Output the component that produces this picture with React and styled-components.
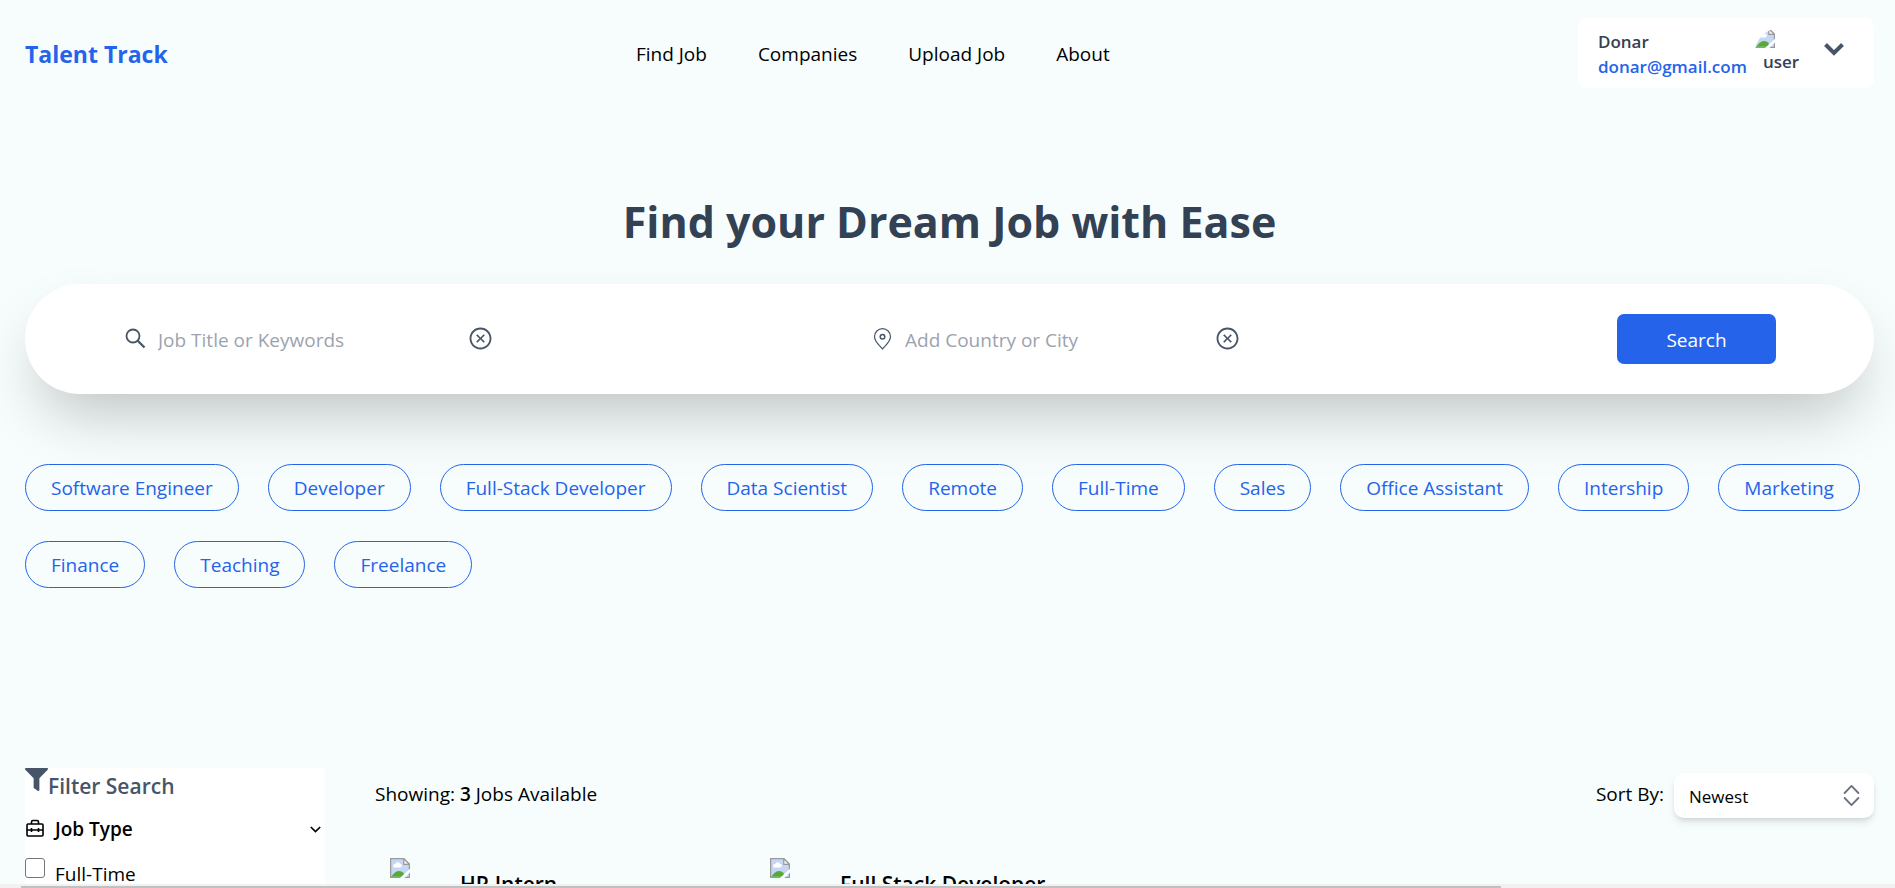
import React from "react";
import styled, { createGlobalStyle } from "styled-components";
import { AiOutlineCloseCircle } from "react-icons/ai";
import { FaFilter } from "react-icons/fa";

const GlobalStyle = createGlobalStyle`
  *, *::before, *::after { box-sizing: border-box; }
  body {
    margin: 0;
    background: #f7fdfd;
    color: #000;
    font-family: "Open Sans", "Noto Sans", sans-serif;
    font-size: 19px;
    line-height: 30px;
  }
  h1, h2, h3, p { margin: 0; }
  button, input, select { font: inherit; color: inherit; }
`;

const Page = styled.div`
  height: 100vh;
  display: flex;
  flex-direction: column;
`;

const Content = styled.div`
  flex: 1;
  min-height: 0;
  overflow: hidden;
`;

const Header = styled.header`
  display: flex;
  align-items: center;
  justify-content: space-between;
  padding: 18px 21px 0 25px;
`;

const Brand = styled.a`
  padding-top: 2px;
  color: #2563eb;
  font-size: 23px;
  font-weight: 700;
  text-decoration: none;
`;

const Nav = styled.nav`
  display: flex;
  gap: 51px;
  padding-top: 2px;
`;

const NavLink = styled.a`
  color: #000;
  text-decoration: none;
`;

const UserMenu = styled.button`
  display: flex;
  align-items: flex-start;
  width: 296px;
  height: 70px;
  padding: 10px 20px;
  border: 0;
  border-radius: 8px;
  background: #fff;
  color: #334155;
  font-size: 17px;
  font-weight: 600;
  line-height: 25px;
  text-align: left;
`;

const UserText = styled.span`
  display: flex;
  flex-direction: column;
  width: 147px;
  padding-top: 1px;
`;

const Email = styled.span`
  color: #2563eb;
`;

const Avatar = styled.span`
  display: flex;
  flex-direction: column;
  width: 50px;
  height: 50px;
  margin-left: 10px;
  border-radius: 50%;
  overflow: hidden;
  line-height: 28px;

  svg { display: block; }
  span { padding-left: 8px; }
`;

const ChevronSlot = styled.span`
  display: flex;
  margin: 11px 0 0 19px;
  color: #475569;
`;

const Main = styled.main`
  padding: 0 21px 0 25px;
`;

const Title = styled.h1`
  margin-top: 104px;
  color: #334155;
  font-size: 43px;
  font-weight: 700;
  line-height: 60px;
  text-align: center;
`;

const SearchBar = styled.form`
  display: flex;
  align-items: center;
  justify-content: space-between;
  height: 110px;
  margin-top: 32px;
  padding: 0 98px;
  border-radius: 55px;
  background: #fff;
  box-shadow: 0 31px 62px -15px rgba(0, 0, 0, 0.25);
`;

const Field = styled.label`
  display: flex;
  align-items: center;
  gap: 10px;
  width: 370px;
  color: #475569;

  svg { flex: none; }
`;

const FieldInput = styled.input`
  flex: 1;
  min-width: 0;
  padding: 4px 0 2px;
  border: 0;
  outline: 0;
  background: transparent;

  &::placeholder { color: #9ca3af; opacity: 1; }
`;

const ClearButton = styled.button`
  display: flex;
  padding: 0 0 2px;
  border: 0;
  background: transparent;
  color: #475569;
`;

const SearchButton = styled.button`
  width: 159px;
  height: 50px;
  padding: 2px 0 0;
  border: 0;
  border-radius: 7px;
  background: #2563eb;
  color: #fff;
`;

const Tags = styled.div`
  display: flex;
  flex-wrap: wrap;
  gap: 30px 29px;
  margin-top: 70px;
`;

const Tag = styled.button`
  height: 47px;
  padding: 0 25px;
  border: 1px solid #2563eb;
  border-radius: 24px;
  background: transparent;
  color: #2563eb;
`;

const Results = styled.section`
  display: flex;
  align-items: flex-start;
  gap: 50px;
  margin-top: 180px;
`;

const Filters = styled.aside`
  width: 300px;
  height: 400px;
  flex: none;
  background: #fff;
`;

const FilterTitle = styled.h2`
  display: flex;
  color: #475569;
  font-size: 21px;
  font-weight: 600;
  line-height: 36px;
`;

const FilterGroup = styled.button`
  display: flex;
  align-items: center;
  width: 100%;
  margin-top: 10px;
  padding: 0 4px 0 0;
  border: 0;
  background: transparent;
  font-weight: 600;

  span { flex: 1; padding-left: 10px; text-align: left; }
`;

const CheckRow = styled.label`
  display: flex;
  gap: 10px;
  padding-top: 14px;
  line-height: 32px;
`;

const Checkbox = styled.input`
  appearance: none;
  width: 20px;
  height: 20px;
  margin: 0;
  border: 1px solid #767676;
  border-radius: 3px;
  background: #fff;
`;

const Listing = styled.div`
  flex: 1;
  min-width: 0;
`;

const ListingBar = styled.div`
  display: flex;
  align-items: center;
  justify-content: space-between;
  height: 52px;
`;

const Count = styled.strong`
  font-weight: 600;
`;

const SortControl = styled.label`
  display: flex;
  align-items: center;
  gap: 10px;
`;

const SelectBox = styled.span`
  position: relative;
  width: 200px;
  padding-top: 3px;

  svg { position: absolute; right: 10px; top: 13px; pointer-events: none; }
`;

const Select = styled.select`
  display: block;
  appearance: none;
  width: 100%;
  height: 45px;
  padding: 2px 15px 0;
  border: 0;
  border-radius: 10px;
  background: #fff;
  font-size: 17px;
  box-shadow: 0 5px 8px -1px rgba(0, 0, 0, 0.1), 0 3px 5px -2px rgba(0, 0, 0, 0.1);
`;

const Jobs = styled.div`
  display: grid;
  grid-template-columns: repeat(4, 380px);
  margin-top: 38px;
`;

const Job = styled.article`
  display: flex;
  gap: 50px;
  padding-left: 15px;

  svg { flex: none; }
`;

const JobTitle = styled.h3`
  padding-top: 11px;
  font-size: 21px;
  font-weight: 600;
  line-height: 30px;
`;

const ScrollTrack = styled.div`
  flex: none;
  height: 4px;
  padding: 2px 0 0 21px;
  background: #f1f1f1;
`;

const ScrollThumb = styled.div`
  width: 79%;
  height: 2px;
  background: #c1c1c1;
`;

const MissingImage = () => (
  <svg width="20" height="20" viewBox="0 0 16 16" aria-hidden="true">
    <path d="M0.5 0.5H11L15.5 5V15.5H0.5Z" fill="#c6d7f5" stroke="#9a9a9a" />
    <path d="M2.5 6.5a2 2 0 0 1 2-2 2 2 0 0 1 3.5 0 1.5 1.5 0 0 1 0 3H3Z" fill="#fff" />
    <path d="M1 15C4 10 8 9 11 12V15Z" fill="#57ab35" />
    <path d="M11 0.5V5H15.5Z" fill="#f4f4f4" stroke="#9a9a9a" />
    <path d="M8 16L16 8.5V11.5L11.5 16Z" fill="#fff" />
  </svg>
);

const SearchIcon = () => (
  <svg width="25" height="25" viewBox="0 0 25 25" fill="none" stroke="currentColor" aria-hidden="true">
    <circle cx="10" cy="9" r="6.5" strokeWidth="1.8" />
    <path d="M14.5 13.5L21.5 20.5" strokeWidth="2.3" />
  </svg>
);

const PinIcon = () => (
  <svg width="25" height="25" viewBox="0 0 25 25" fill="none" stroke="currentColor" strokeWidth="1.2" aria-hidden="true">
    <path d="M12.5 22C10.5 19 4.5 15 4.5 9.7A8 8 0 0 1 20.5 9.7C20.5 15 14.5 19 12.5 22Z" />
    <circle cx="12.5" cy="9.8" r="2.3" strokeWidth="1.5" />
  </svg>
);

const ChevronIcon = ({ size, weight }) => (
  <svg width={size} height={size} viewBox="0 0 20 20" fill="none" stroke="currentColor" strokeWidth={weight} aria-hidden="true">
    <path d="M1.5 5.5L10 14L18.5 5.5" />
  </svg>
);

const ToolboxIcon = () => (
  <svg width="20" height="20" viewBox="0 0 20 20" fill="none" stroke="currentColor" strokeWidth="1.6" strokeLinejoin="round" aria-hidden="true">
    <rect x="2" y="5" width="16" height="12" rx="1" />
    <path d="M6.500 5V3A1.500 1.500 0 0 1 8 1.500H12A1.500 1.500 0 0 1 13.500 3V5M2 11H18M6.500 9V13M13.500 9V13" />
  </svg>
);

const UpDownIcon = () => (
  <svg width="25" height="25" viewBox="0 0 20 20" fill="none" stroke="#6b7280" strokeWidth="1.5" strokeLinecap="round" strokeLinejoin="round" aria-hidden="true">
    <path d="M4.5 8L10 2.3L15.5 8M4.5 12L10 17.7L15.5 12" />
  </svg>
);

const TAGS = [
  "Software Engineer", "Developer", "Full-Stack Developer", "Data Scientist", "Remote",
  "Full-Time", "Sales", "Office Assistant", "Intership", "Marketing",
  "Finance", "Teaching", "Freelance",
];

const JOBS = ["HR Intern", "Full Stack Developer"];

function SearchField({ icon, placeholder }) {
  return (
    <Field>
      {icon}
      <FieldInput type="text" placeholder={placeholder} aria-label={placeholder} />
      <ClearButton type="button" aria-label="Clear">
        <AiOutlineCloseCircle size={25} />
      </ClearButton>
    </Field>
  );
}

export default function App() {
  return (
    <Page>
      <GlobalStyle />
      <Content>
        <Header>
          <Brand href="#">Talent Track</Brand>
          <Nav>
            {["Find Job", "Companies", "Upload Job", "About"].map((item) => (
              <NavLink href="#" key={item}>{item}</NavLink>
            ))}
          </Nav>
          <UserMenu type="button">
            <UserText>
              <span>Donar</span>
              <Email>donar@gmail.com</Email>
            </UserText>
            <Avatar>
              <MissingImage />
              <span>user</span>
            </Avatar>
            <ChevronSlot><ChevronIcon size={20} weight={4} /></ChevronSlot>
          </UserMenu>
        </Header>
        <Main>
          <Title>Find your Dream Job with Ease</Title>
          <SearchBar>
            <SearchField icon={<SearchIcon />} placeholder="Job Title or Keywords" />
            <SearchField icon={<PinIcon />} placeholder="Add Country or City" />
            <SearchButton type="submit">Search</SearchButton>
          </SearchBar>
          <Tags>
            {TAGS.map((tag) => <Tag type="button" key={tag}>{tag}</Tag>)}
          </Tags>
          <Results>
            <Filters>
              <FilterTitle><FaFilter size={23} />Filter Search</FilterTitle>
              <FilterGroup type="button">
                <ToolboxIcon />
                <span>Job Type</span>
                <ChevronIcon size={11} weight={3} />
              </FilterGroup>
              <CheckRow><Checkbox type="checkbox" />Full-Time</CheckRow>
            </Filters>
            <Listing>
              <ListingBar>
                <p>Showing: <Count>3</Count> Jobs Available</p>
                <SortControl>
                  Sort By:
                  <SelectBox>
                    <Select defaultValue="Newest"><option>Newest</option></Select>
                    <UpDownIcon />
                  </SelectBox>
                </SortControl>
              </ListingBar>
              <Jobs>
                {JOBS.map((job) => (
                  <Job key={job}><MissingImage /><JobTitle>{job}</JobTitle></Job>
                ))}
              </Jobs>
            </Listing>
          </Results>
        </Main>
      </Content>
      <ScrollTrack><ScrollThumb /></ScrollTrack>
    </Page>
  );
}
